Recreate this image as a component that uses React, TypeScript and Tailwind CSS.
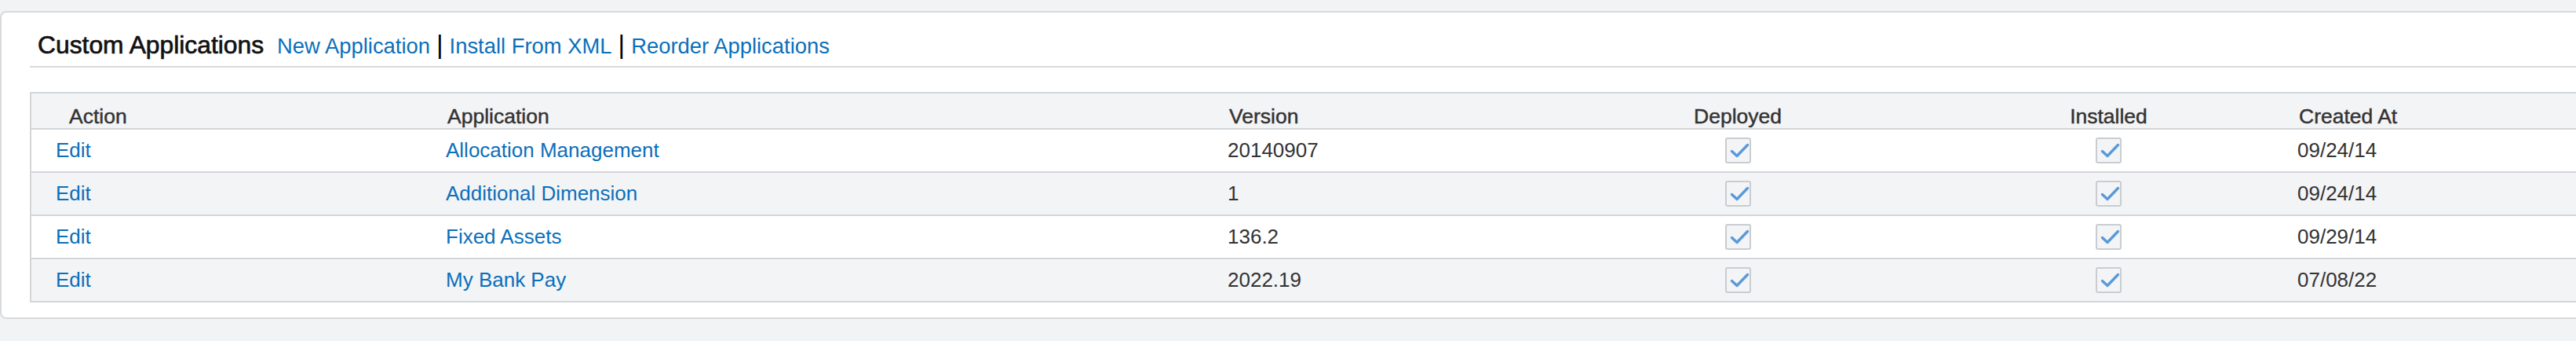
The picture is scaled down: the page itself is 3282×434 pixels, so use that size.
const apps = [
  { name: "Allocation Management", version: "20140907", created: "09/24/14" },
  { name: "Additional Dimension", version: "1", created: "09/24/14" },
  { name: "Fixed Assets", version: "136.2", created: "09/29/14" },
  { name: "My Bank Pay", version: "2022.19", created: "07/08/22" },
];

const cols = "grid grid-cols-[528px_996px_418px_464px_481px_1fr]";

function CheckBox() {
  return (
    <div className="w-[33px] h-[33px] border-2 border-[#c9cdd1] rounded-[3px] bg-[#f3f4f6]">
      <svg width="29" height="29" viewBox="0 0 29 29" fill="none">
        <path
          d="M6.5 15.5 L13 21.5 L26.5 7.5"
          stroke="#5a9ad8"
          strokeWidth="3.4"
          strokeLinecap="round"
          strokeLinejoin="round"
        />
      </svg>
    </div>
  );
}

export default function App() {
  return (
    <div className="w-[3282px] h-[434px] overflow-hidden bg-[#f2f3f5] pt-[14px] font-['Liberation_Sans',Arial,sans-serif]">
      <div className="w-[3330px] bg-white border-2 border-[#d7dadd] rounded-[8px] pt-[24px] pb-[19px]">
        <div className="ml-[36px] border-b-2 border-[#d7dadd] pl-[10px] pb-[9px] flex items-baseline">
          <span className="text-[31.8px] leading-[32px] text-[#111] [-webkit-text-stroke:0.7px_#111]">
            Custom Applications
          </span>
          <a className="ml-[17px] text-[27.4px] leading-[32px] text-[#0b6fba]">New Application</a>
          <span className="mx-[8px] text-[33px] leading-none text-black">|</span>
          <a className="text-[27.4px] leading-[32px] text-[#0b6fba]">Install From XML</a>
          <span className="mx-[8px] text-[33px] leading-none text-black">|</span>
          <a className="text-[27.4px] leading-[32px] text-[#0b6fba]">Reorder Applications</a>
        </div>

        <div className="ml-[36px] mt-[31px] border-2 border-[#d3d6d9]">
          <div
            className={`${cols} h-[46px] bg-[#f3f4f6] border-b-2 border-[#d3d6d9] text-[26.5px] leading-[28px] text-[#333] [-webkit-text-stroke:0.45px_#333]`}
          >
            <div className="pl-[48px] pt-[15px]">Action</div>
            <div className="pl-[2px] pt-[15px]">Application</div>
            <div className="pl-[2px] pt-[15px]">Version</div>
            <div className="pt-[15px] text-center">Deployed</div>
            <div className="pt-[15px] text-center">Installed</div>
            <div className="pl-[2px] pt-[15px]">Created At</div>
          </div>
          {apps.map((app, i) => (
            <div
              key={app.name}
              className={`${cols} h-[53px] items-center text-[26px] text-[#333] ${
                i % 2 === 1 ? "bg-[#f3f4f6]" : "bg-white"
              } ${i < apps.length - 1 ? "box-content border-b-2 border-[#d3d6d9]" : ""}`}
            >
              <a className="pl-[31px] text-[#0b6fba]">Edit</a>
              <a className="text-[#0b6fba]">{app.name}</a>
              <div>{app.version}</div>
              <div className="flex justify-center">
                <CheckBox />
              </div>
              <div className="flex justify-center">
                <CheckBox />
              </div>
              <div>{app.created}</div>
            </div>
          ))}
        </div>
      </div>
    </div>
  );
}
